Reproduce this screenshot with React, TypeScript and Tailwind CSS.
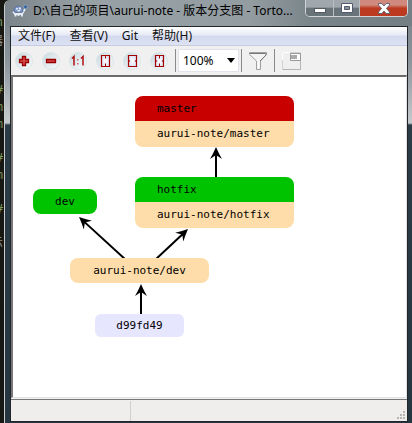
import React from "react";

const editorMarks = [
  { top: "top-[14px]", text: "n", tone: "text-[#7d9a5a]" },
  { top: "top-[33px]", text: "器", tone: "text-[#8c8c84]" },
  { top: "top-[82px]", text: "#", tone: "text-[#7d9a5a]" },
  { top: "top-[99px]", text: "m", tone: "text-[#7d9a5a]" },
  { top: "top-[116px]", text: "m", tone: "text-[#7d9a5a]" },
  { top: "top-[150px]", text: "#", tone: "text-[#7d9a5a]" },
  { top: "top-[167px]", text: "m", tone: "text-[#7d9a5a]" },
  { top: "top-[201px]", text: "#", tone: "text-[#7d9a5a]" },
  { top: "top-[235px]", text: "示", tone: "text-[#8c8c84]" },
];

function TurtleIcon() {
  return (
    <svg width="16" height="14" viewBox="0 0 16 14" aria-hidden="true">
      <path d="M1 7.500l2 2.500h7l3-5" fill="none" stroke="#e4ebf5" strokeWidth="1.800" />
      <path d="M3.500 9.500v3M6.500 10v2M10 9v3.500" stroke="#e6eef8" strokeWidth="1.800" />
      <path d="M2 8Q2 2 6.500 2Q10.500 2 11 8Z" fill="#7f9aca" stroke="#4a669c" strokeWidth="0.700" />
      <path d="M4 4h2v1.500H4zM7 3.500h2v2H7zM5.500 6h2.500v1.500H5.500z" fill="#e0e9f8" />
      <circle cx="13.500" cy="2.800" r="1.900" fill="#2e5f9a" stroke="#9fb9dc" strokeWidth="0.600" />
    </svg>
  );
}

function Round({ label, children }: { label: string; children: React.ReactNode }) {
  return (
    <button type="button" aria-label={label} className="flex w-[27px] shrink-0 items-center justify-center">
      <svg width="19" height="18" viewBox="0 0 19 18">
        <defs>
          <linearGradient id="glass" x1="0" y1="0" x2="1" y2="1">
            <stop offset="0" stopColor="#c6d9de" />
            <stop offset="0.500" stopColor="#e2ebef" />
            <stop offset="1" stopColor="#f8fafb" />
          </linearGradient>
          <radialGradient id="paper">
            <stop offset="0" stopColor="#ffffff" />
            <stop offset="1" stopColor="#dbe3f4" />
          </radialGradient>
        </defs>
        <circle cx="9" cy="9" r="8.500" fill="url(#glass)" stroke="#d6e3e6" strokeWidth="0.800" />
        {children}
      </svg>
    </button>
  );
}

function Divider() {
  return <div className="h-[23px] w-px shrink-0 bg-[#8a8a8a]" />;
}

function Toolbar() {
  return (
    <div className="flex h-[29px] shrink-0 items-center bg-[#f0f0f0]">
      <Round label="Zoom in">
        <path d="M7.500 4.500h3v3h3v3h-3v3h-3v-3h-3v-3h3z" fill="#d64a4a" stroke="#990000" strokeWidth="1.300" />
      </Round>
      <Round label="Zoom out">
        <path d="M4.500 7.500h9v3h-9z" fill="#d64a4a" stroke="#990000" strokeWidth="1.300" />
      </Round>
      <Round label="Zoom 100%">
        <path d="M3 6.500l2-2v9M12 6.500l2-2v9" fill="none" stroke="#b01010" strokeWidth="1.500" />
        <path d="M8 7h1.500v1.500H8zM8 11h1.500v1.500H8z" fill="#d06868" />
      </Round>
      <Round label="Fit height">
        <path d="M5.500 3.500h8v11h-8z" fill="url(#paper)" stroke="#a40000" strokeWidth="1.200" />
        <path d="M9 4h1v2.500H9zM9 11.500h1V14H9z" fill="#a40000" />
      </Round>
      <Round label="Fit width">
        <path d="M5.500 3.500h8v11h-8z" fill="url(#paper)" stroke="#a40000" strokeWidth="1.200" />
        <path d="M5 7.500l2.500 1.500L5 10.500zM14 7.500L11.500 9l2.500 1.500z" fill="#a40000" />
      </Round>
      <Round label="Fit graph">
        <path d="M5.500 3.500h8v11h-8z" fill="url(#paper)" stroke="#a40000" strokeWidth="1.200" />
        <path d="M9 4h1v2.500H9zM9 11.500h1V14H9zM5 7.500l2.500 1.500L5 10.500zM14 7.500L11.500 9l2.500 1.500z" fill="#a40000" />
      </Round>
      <div className="ml-[2px]">
        <Divider />
      </div>
      <div className="relative mx-[2px] h-[23px] w-[61px] shrink-0">
        <select
          aria-label="Zoom level"
          defaultValue="100%"
          className="block h-full w-full appearance-none border border-[#e2e3ea] bg-white pl-[4px] text-xs leading-[20px] text-black"
        >
          <option>50%</option>
          <option>100%</option>
          <option>200%</option>
        </select>
        <svg className="pointer-events-none absolute top-[9px] right-[4px]" width="8" height="5" viewBox="0 0 8 5">
          <path d="M0 0h8L4 5z" fill="#000" />
        </svg>
      </div>
      <Divider />
      <button type="button" aria-label="Filter" className="flex w-8 shrink-0 items-center justify-center">
        <svg width="18" height="18" viewBox="0 0 18 18">
          <path d="M0.500 0.500h17v2l-6 6.500v8.500h-4V9l-7-6.500z" fill="#f3f3f3" stroke="#a0a0a0" />
          <path d="M1 1.500h15.500M17 1v2l-6 6" fill="none" stroke="#777" />
          <path d="M9.500 9v7" stroke="#fff" />
        </svg>
      </button>
      <Divider />
      <button type="button" aria-label="Overview" className="flex w-8 shrink-0 items-center justify-center">
        <svg width="19" height="18" viewBox="0 0 19 18">
          <path d="M0.500 0.500h18v17h-18z" fill="#efefef" stroke="#d2d2d2" />
          <path d="M0.500 8V0.500H8" fill="none" stroke="#fff" />
          <path d="M18.500 1v16.500H1" fill="none" stroke="#b4b4b4" />
          <path d="M8.500 1.500h10v7h-10z" fill="#fff" stroke="#999" />
          <path d="M9 3h6v4H9z" fill="#aaa" />
        </svg>
      </button>
    </div>
  );
}

const arrows = [
  { from: [203, 102], to: [203, 70] },
  { from: [113, 183], to: [66, 140] },
  { from: [142, 183], to: [175, 152] },
  { from: [128, 239], to: [128, 207] },
];

function Arrow({ from, to }: { from: number[]; to: number[] }) {
  const length = Math.hypot(to[0] - from[0], to[1] - from[1]);
  const angle = (Math.atan2(to[1] - from[1], to[0] - from[0]) * 180) / Math.PI;
  return (
    <g transform={`translate(${to[0]} ${to[1]}) rotate(${angle})`}>
      <path d={`M${-length} 0H-5`} stroke="#000" strokeWidth="2" />
      <path d="M0 0Q-7 -3 -12 -6L-8 0L-12 6Q-7 3 0 0Z" fill="#000" />
    </g>
  );
}

function Graph() {
  return (
    <main className="relative min-h-[320px] flex-1 overflow-hidden border-t-2 border-r border-b border-l-2 border-t-[#6b6b6b] border-r-[#e3e3e3] border-b-[#dfe5e5] border-l-[#777] bg-white font-['DejaVu_Sans_Mono',monospace] text-[11px] leading-[25px] text-black">
      <svg className="absolute top-0 left-0" width="300" height="270">
        {arrows.map((arrow, i) => (
          <Arrow key={i} {...arrow} />
        ))}
      </svg>
      <div className="absolute top-[19px] left-[122px] w-[159px] overflow-hidden rounded-lg">
        <div className="bg-[#c80000] pl-[22px]">master</div>
        <div className="h-[26px] bg-[#ffddaa] pl-[22px]">aurui-note/master</div>
      </div>
      <div className="absolute top-[100px] left-[122px] w-[159px] overflow-hidden rounded-lg">
        <div className="bg-[#00c300] pl-[22px]">hotfix</div>
        <div className="h-[26px] bg-[#ffddaa] pl-[22px]">aurui-note/hotfix</div>
      </div>
      <div className="absolute top-[112px] left-[20px] w-16 rounded-lg bg-[#00c300] text-center">dev</div>
      <div className="absolute top-[181px] left-[57px] w-[139px] rounded-lg bg-[#ffddaa] text-center">aurui-note/dev</div>
      <div className="absolute top-[237px] left-[82px] w-[89px] rounded-md bg-[#e6e6ff] text-center leading-[23px]">d99fd49</div>
    </main>
  );
}

export default function App() {
  return (
    <div className="flex min-h-screen overflow-hidden bg-[#171714] font-['Noto_Sans','Noto_Sans_CJK_SC',sans-serif] text-xs text-[#111]">
      <aside aria-hidden="true" className="relative w-1 shrink-0 overflow-hidden font-['DejaVu_Sans_Mono','Noto_Sans_CJK_SC',monospace] leading-4">
        {editorMarks.map((mark) => (
          <span key={mark.top} className={`absolute right-px ${mark.top} ${mark.tone}`}>
            {mark.text}
          </span>
        ))}
      </aside>
      <div className="flex min-w-0 flex-1 flex-col rounded-tl-md border-l border-[#c5cbce] bg-[linear-gradient(to_bottom,#747d83_0px,#8b949a_60px,#c5cacd_123px,#2b3c46_125px,#263640_100%)] pr-[4px] pl-[5px]">
        <header className="-mr-[4px] -ml-[5px] flex h-[26px] shrink-0 items-start rounded-tl-md bg-[linear-gradient(to_right,#7b848a_0%,#98a1a6_20%,#939ca1_60%,#7a858b_75%,#737e85_100%)] pl-[7px]">
          <div className="mt-1">
            <TurtleIcon />
          </div>
          <h1 className="ml-[5px] min-w-0 flex-1 truncate pt-[2px] leading-[18px] whitespace-pre text-black">
            D:\自己的项目\aurui-note - 版本分支图 - Torto...
          </h1>
          <div className="mr-[4px] flex h-[17px] shrink-0 overflow-hidden rounded-b-[5px] border border-t-0 border-[#d0d4d7]">
            <button type="button" aria-label="Minimize" className="flex w-7 items-center justify-center border-r border-[#b8bec2] bg-linear-to-b from-[#a0a8ad] from-45% to-[#68737a] to-50%">
              <span className="mt-1 h-[5px] w-3 border border-[#535a60] bg-white" />
            </button>
            <button type="button" aria-label="Maximize" className="flex w-[26px] items-center justify-center border-r border-[#b8bec2] bg-linear-to-b from-[#a0a8ad] from-45% to-[#68737a] to-50%">
              <svg width="12" height="10" viewBox="0 0 12 10">
                <path d="M0.500 0.500h11v9h-11z" fill="#fff" stroke="#535a70" />
                <path d="M3.500 3.500h5v3h-5z" fill="#8b949a" stroke="#535a70" />
              </svg>
            </button>
            <button type="button" aria-label="Close" className="flex w-[47px] items-center justify-center bg-linear-to-b from-[#d08a7d] from-30% to-[#bb3a20] to-50%">
              <svg width="12" height="11" viewBox="0 0 12 11">
                <path d="M0.500 0.500h3.500l2 2.500 2-2.500h3.500v1.500l-3 3.500 3 3.500v1.500H8L6 8l-2 2.500H0.500V9l3-3.500-3-3.500z" fill="#fff" stroke="#535a70" strokeWidth="0.900" />
              </svg>
            </button>
          </div>
        </header>
        <div className="mb-px flex min-h-0 flex-1 flex-col border border-[#20262a] bg-[#f0f0f0]">
          <nav className="flex h-[19px] shrink-0 items-center gap-[14px] border-b border-[#c8cce0] bg-[linear-gradient(to_bottom,#ffffff,#e6eaf6_45%,#d4daee_50%,#dce1f3)] pl-[7px] leading-[18px]">
            <button type="button">文件(F)</button>
            <button type="button">查看(V)</button>
            <button type="button">Git</button>
            <button type="button">帮助(H)</button>
          </nav>
          <Toolbar />
          <Graph />
          <footer className="mt-px flex h-[22px] shrink-0 items-stretch border-t border-[#777] bg-[#f0eded] pt-px">
            <div className="w-[120px] border-r border-[#d0d0d0]" />
            <div className="flex flex-1 items-end justify-end p-px">
              <svg width="9" height="9" viewBox="0 0 9 9" aria-hidden="true">
                <path d="M6 0h2v2H6zM3 3h2v2H3zM6 3h2v2H6zM0 6h2v2H0zM3 6h2v2H3zM6 6h2v2H6z" fill="#b8b5b5" />
              </svg>
            </div>
          </footer>
        </div>
      </div>
    </div>
  );
}
